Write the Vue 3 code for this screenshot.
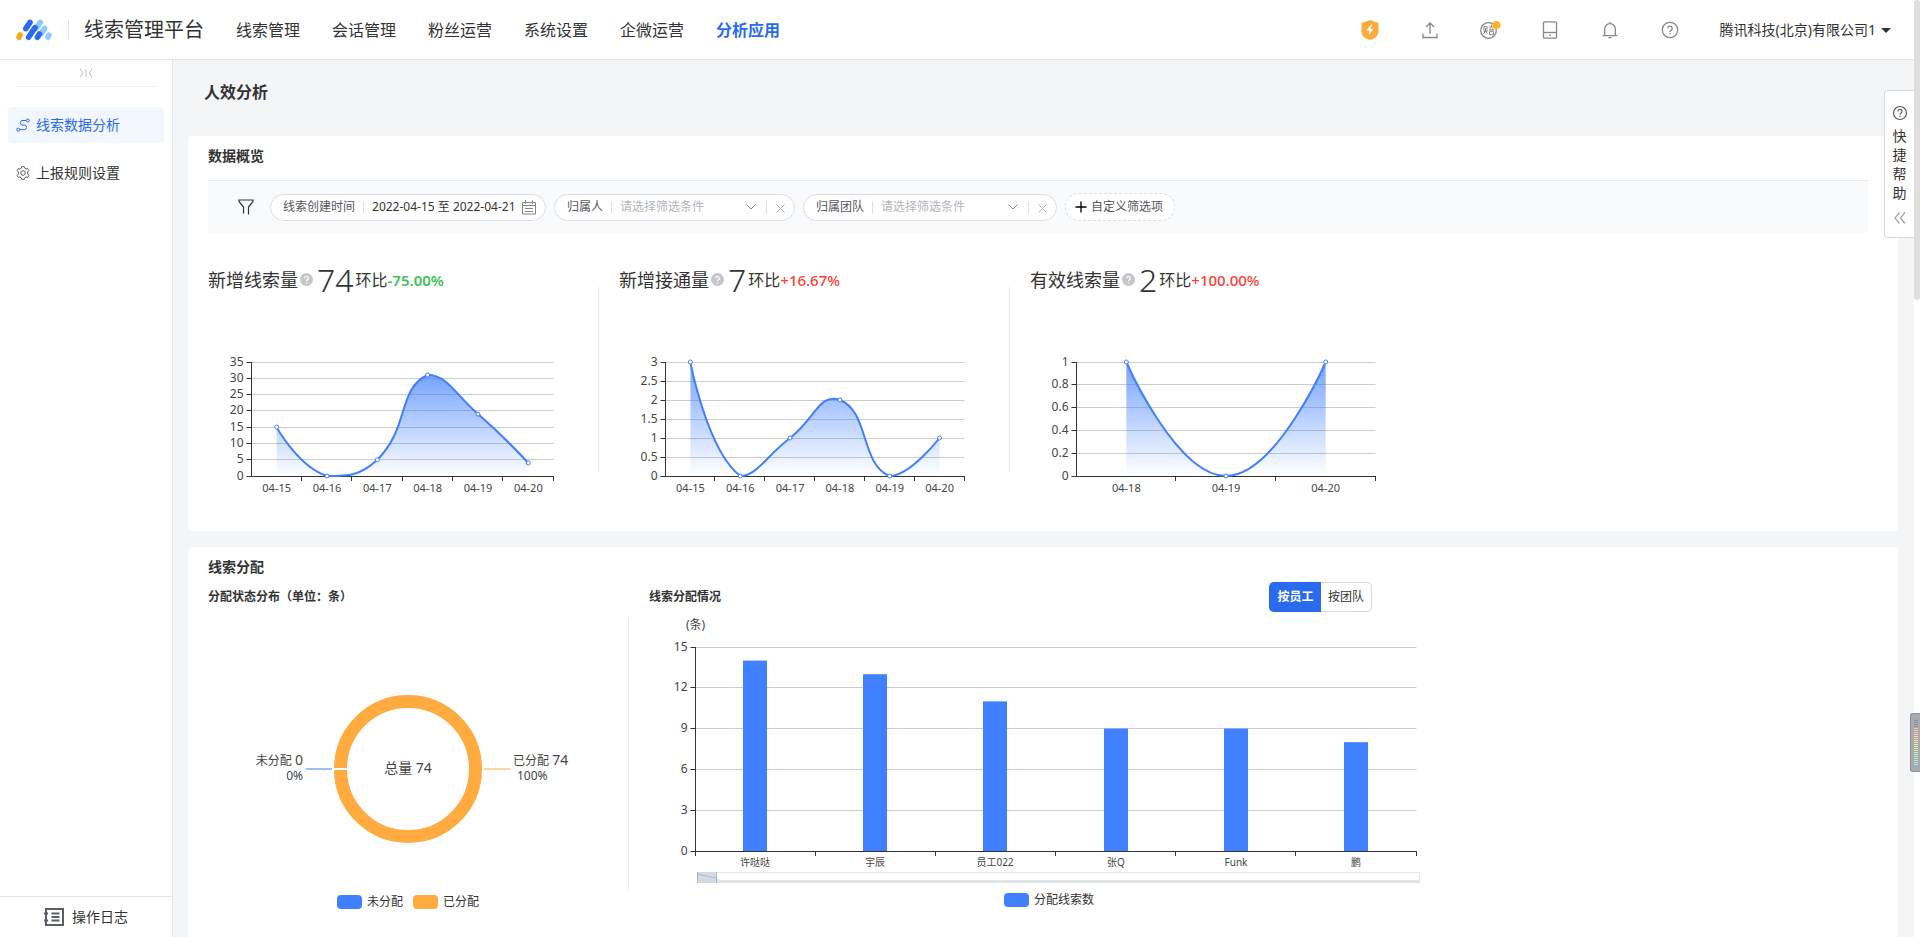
<script setup>
import { ref } from 'vue'

const navItems = ['线索管理', '会话管理', '粉丝运营', '系统设置', '企微运营', '分析应用']
const createdRange = ref('2022-04-15 至 2022-04-21')
const groupBy = ref('staff')

// Turns a series into plot coordinates, axis ticks and a smoothed path.
function buildTrend(cfg) {
  const top = 62
  const bottom = 176
  const { left, right, labels, values, ticks } = cfg
  const max = ticks[ticks.length - 1]
  const step = (right - left) / labels.length
  const toY = (v) => bottom - (v / max) * (bottom - top)
  const pts = values.map((v, i) => [left + step * (i + 0.5), toY(v)])
  const loX = pts[0][0]
  const hiX = pts[pts.length - 1][0]
  const ys = pts.map((p) => p[1])
  const loY = Math.min(...ys)
  const hiY = Math.max(...ys)
  const clamp = (p) => [Math.min(Math.max(p[0], loX), hiX), Math.min(Math.max(p[1], loY), hiY)]
  const smooth = 0.5
  let cp0 = pts[0]
  let line = `M${pts[0].join(' ')}`
  for (let i = 1; i < pts.length; i++) {
    const p = pts[i]
    const prev = pts[i - 1]
    const next = pts[i + 1]
    let cp1 = p
    let following = p
    if (next) {
      const v = [next[0] - prev[0], next[1] - prev[1]]
      const lenPrev = Math.hypot(p[0] - prev[0], p[1] - prev[1])
      const lenNext = Math.hypot(next[0] - p[0], next[1] - p[1])
      const ratio = lenNext / (lenNext + lenPrev)
      cp1 = [p[0] - v[0] * smooth * (1 - ratio), p[1] - v[1] * smooth * (1 - ratio)]
      following = [p[0] + v[0] * smooth * ratio, p[1] + v[1] * smooth * ratio]
    }
    line += `C${clamp(cp0).join(' ')} ${clamp(cp1).join(' ')} ${p.join(' ')}`
    cp0 = following
  }
  return {
    ...cfg,
    top,
    bottom,
    pts,
    line,
    area: `${line}L${hiX} ${bottom}L${loX} ${bottom}Z`,
    yTicks: ticks.map((t) => ({ label: t, y: Math.floor(toY(t)) + 0.5 })),
    xTicks: labels.map((_, i) => Math.round(left + step * (i + 1)) - 0.5),
  }
}

const trends = [
  buildTrend({
    name: '新增线索量', total: '74', change: '-75.00%', down: true, left: 43.5, right: 345.5,
    labels: ['04-15', '04-16', '04-17', '04-18', '04-19', '04-20'],
    values: [15, 0, 5, 31, 19, 4], ticks: [0, 5, 10, 15, 20, 25, 30, 35],
  }),
  buildTrend({
    name: '新增接通量', total: '7', change: '+16.67%', down: false, left: 46.5, right: 345.5,
    labels: ['04-15', '04-16', '04-17', '04-18', '04-19', '04-20'],
    values: [3, 0, 1, 2, 0, 1], ticks: [0, 0.5, 1, 1.5, 2, 2.5, 3],
  }),
  buildTrend({
    name: '有效线索量', total: '2', change: '+100.00%', down: false, left: 46.5, right: 345.5,
    labels: ['04-18', '04-19', '04-20'],
    values: [1, 0, 1], ticks: [0, 0.2, 0.4, 0.6, 0.8, 1],
  }),
]

const barLeft = 46.5
const barRight = 767.5
const barTop = 35
const barBottom = 239
const barStep = (barRight - barLeft) / 6
const bars = [
  ['许哒哒', 14], ['宇辰', 13], ['员工022', 11], ['张Q', 9], ['Funk', 9], ['鹏', 8],
].map(([name, value], i) => ({
  name,
  cx: Math.floor(barLeft + barStep * (i + 0.5)),
  tick: Math.round(barLeft + barStep * (i + 1)) - 0.5,
  height: (value / 15) * (barBottom - barTop),
}))
const barTicks = [0, 3, 6, 9, 12, 15].map((v) => ({
  v,
  y: Math.floor(barBottom - (v / 15) * (barBottom - barTop)) + 0.5,
}))

const meter = Array.from({ length: 23 }, (_, i) => {
  if (i < 4) return '#8e8f97'
  const stops = ['#ffc1a0', '#ffd79a', '#f6e99a', '#e3f2a0', '#c5f2ae', '#aeeec4', '#a4ecdc']
  return stops[Math.min(6, Math.floor(((i - 4) / 19) * 7))]
})
</script>

<template>
  <div class="app">
    <header class="topbar">
      <svg class="logo" width="36" height="22" viewBox="0 0 36 22" aria-hidden="true">
        <g fill="none" stroke-width="5.6" stroke-linecap="round">
          <path d="M3.1 18.2l.9-2.2" stroke="#ffa412" />
          <path d="M20.3 9.2l4-5.8M25.2 14.6l3.4-5.2M32 18l1-1.8" stroke="#8bcbff" />
          <path d="M9.8 9.6l4.2-6.2M12.6 18.2l6.4-9.6M21.4 18.2l2-3.2" stroke="#2b6af2" />
        </g>
      </svg>
      <span class="logo-divider"></span>
      <strong class="brand">线索管理平台</strong>
      <nav class="nav" aria-label="主导航">
        <a v-for="item in navItems" :key="item" href="#" :class="{ current: item === '分析应用' }">{{ item }}</a>
      </nav>
      <div class="tools">
        <button type="button" class="tool" aria-label="安全">
          <svg width="18" height="20" viewBox="0 0 18 20">
            <path d="M9 0l8.500 3v8c0 5-3.600 7.700-8.500 9C4.100 18.700.500 16 .500 11V3z" fill="#ffab40" />
            <path d="M9.800 4.800L5.600 10.600h2.700l-.800 4.600 4.700-6.300H9.500l1.700-4.100z" fill="#fff" />
          </svg>
        </button>
        <button type="button" class="tool" aria-label="上传">
          <svg width="16" height="18" viewBox="0 0 16 18">
            <path d="M8 13V2M4 6l4-4 4 4M1 12.500V16.500h14V12.500" />
          </svg>
        </button>
        <button type="button" class="tool" aria-label="赔付">
          <svg width="22" height="20" viewBox="0 0 22 20">
            <circle cx="9.500" cy="10.500" r="7.800" />
            <path d="M5 6.500h3v5H5zM6.500 8v3l-2 3M7 12l1.500 2M10 7h5M12.500 5v2M11 8.200l.500 1.600M14 8.200l-.500 1.600M9.800 10h5.400M10.500 11.700h4v3h-4z" stroke-width="1" />
            <circle cx="17.500" cy="5" r="4" fill="#ffb429" stroke="none" />
          </svg>
        </button>
        <button type="button" class="tool" aria-label="移动端">
          <svg width="16" height="20" viewBox="0 0 16 20">
            <rect x="1.500" y="1.800" width="13" height="16.400" rx="1" />
            <path d="M1.500 12.500h13" />
            <path d="M7.200 15.300h1.600" stroke-width="1.600" />
          </svg>
        </button>
        <button type="button" class="tool" aria-label="通知">
          <svg width="16" height="18" viewBox="0 0 16 18">
            <path d="M.500 14.700h15M2.700 14.500V8a5.300 5.300 0 0 1 10.600 0v6.500M8 1v1.500M6.500 16.700h3" />
          </svg>
        </button>
        <button type="button" class="tool" aria-label="帮助">
          <svg width="18" height="18" viewBox="0 0 18 18">
            <circle cx="9" cy="9" r="7.700" />
            <path d="M6.800 7.200a2.200 2.200 0 1 1 3.400 1.900c-.800.500-1.200.900-1.200 1.900" />
            <path d="M9 12.300v1.300" />
          </svg>
        </button>
      </div>
      <button type="button" class="account">腾讯科技(北京)有限公司1<i class="caret"></i></button>
    </header>

    <div class="body">
      <aside class="sidebar">
        <button type="button" class="collapse" aria-label="收起侧栏">
          <svg width="14" height="10" viewBox="0 0 14 10">
            <path d="M1 .500l2.500 4.500L1 9.500M7 1v8M13 .500l-2.500 4.500L13 9.500" />
          </svg>
        </button>
        <a href="#" class="side-link active">
          <svg width="14" height="14" viewBox="0 0 14 14">
            <path d="M10.300 2.500H6a2.300 2.300 0 0 0 0 4.500h2.200a2.300 2.300 0 0 1 0 4.600H3.700" />
            <circle cx="11.800" cy="2.500" r="1.500" />
            <circle cx="2.200" cy="11.600" r="1.500" />
          </svg>
          线索数据分析
        </a>
        <a href="#" class="side-link">
          <svg width="14" height="14" viewBox="0 0 14 14">
            <path d="M5.300 2.200L5.800.600h2.400l.500 1.600 1.300.800 1.700-.400 1.200 2-1.200 1.300v2.200l1.200 1.300-1.200 2-1.700-.400-1.300.800-.500 1.600H5.800l-.500-1.600-1.300-.800-1.700.400-1.200-2 1.200-1.300V5.900L1.100 4.600l1.200-2 1.700.400z" />
            <circle cx="7" cy="7" r="2.300" />
          </svg>
          上报规则设置
        </a>
        <a href="#" class="log-link">
          <svg width="20" height="18" viewBox="0 0 20 18">
            <rect x="2" y="1" width="17" height="16" />
            <path d="M7.500 5.500h8M7.500 9h8M7.500 12.500h8M0 5.500h4M0 12.500h4" />
          </svg>
          操作日志
        </a>
      </aside>

      <main class="content">
        <h1>人效分析</h1>

        <section class="card overview">
          <h2>数据概览</h2>
          <div class="filters">
            <svg class="funnel" width="16" height="16" viewBox="0 0 16 16" aria-hidden="true">
              <path d="M5.500 14.500V8L1 2.500V1h14v1.500L10.500 8v7.500" />
            </svg>
            <div class="pill date">
              <label for="created">线索创建时间</label>
              <input id="created" v-model="createdRange" type="text" />
              <svg width="14" height="15" viewBox="0 0 14 15" aria-hidden="true">
                <path d="M.500 2.500h13v11.500H.500zM.500 5.500h13M3.500 0v4M10.500 0v4M3 8.500h8M3 11.500h8" />
              </svg>
            </div>
            <div class="pill owner">
              <label for="owner">归属人</label>
              <select id="owner"><option>请选择筛选条件</option></select>
              <svg class="chev" width="10" height="6" viewBox="0 0 10 6" aria-hidden="true"><path d="M.500.500L5 5 9.500.500" /></svg>
              <button type="button" class="clear" aria-label="移除归属人">
                <svg width="9" height="9" viewBox="0 0 9 9"><path d="M.500.500l8 8M8.500.500l-8 8" /></svg>
              </button>
            </div>
            <div class="pill team">
              <label for="team">归属团队</label>
              <select id="team"><option>请选择筛选条件</option></select>
              <svg class="chev" width="10" height="6" viewBox="0 0 10 6" aria-hidden="true"><path d="M.500.500L5 5 9.500.500" /></svg>
              <button type="button" class="clear" aria-label="移除归属团队">
                <svg width="9" height="9" viewBox="0 0 9 9"><path d="M.500.500l8 8M8.500.500l-8 8" /></svg>
              </button>
            </div>
            <button type="button" class="custom">
              <svg width="12" height="12" viewBox="0 0 12 12"><path d="M6 .500v11M.500 6h11" /></svg>
              自定义筛选项
            </button>
          </div>

          <div class="trends">
            <article v-for="(t, n) in trends" :key="t.name" class="trend">
              <div class="stat">
                <span class="stat-name">{{ t.name }}</span>
                <svg class="hint" width="13" height="13" viewBox="0 0 13 13" aria-hidden="true">
                  <circle cx="6.500" cy="6.500" r="6.500" fill="#c4c6ca" stroke="none" />
                  <path d="M4.700 5.300a1.800 1.800 0 1 1 2.800 1.500c-.700.400-1 .700-1 1.300M6.500 9.200v1.300" />
                </svg>
                <span class="total">{{ t.total }}</span>
                <span class="ratio">环比<b :class="{ down: t.down }">{{ t.change }}</b></span>
              </div>
              <svg class="plot" width="380" height="200" viewBox="0 0 380 200" role="img" :aria-label="t.name">
                <defs>
                  <linearGradient :id="'fill' + n" x1="0" y1="0" x2="0" y2="1">
                    <stop offset="0" stop-color="#407fff" stop-opacity="0.72" />
                    <stop offset="1" stop-color="#407fff" stop-opacity="0" />
                  </linearGradient>
                </defs>
                <g v-for="tick in t.yTicks" :key="tick.label">
                  <line v-if="tick.label" class="grid-line" :x1="t.left" :x2="t.right" :y1="tick.y" :y2="tick.y" />
                  <line class="axis" :x1="t.left - 5" :x2="t.left" :y1="tick.y" :y2="tick.y" />
                  <text class="y-label" :x="t.left - 8" :y="tick.y + 3">{{ tick.label }}</text>
                </g>
                <path class="axis" :d="`M${t.left} ${t.top}V${t.bottom + 0.5}H${t.right}`" />
                <line v-for="x in t.xTicks" :key="x" class="axis" :x1="x" :x2="x" :y1="t.bottom" :y2="t.bottom + 5" />
                <text v-for="(l, i) in t.labels" :key="l" class="x-label" :x="t.pts[i][0]" :y="t.bottom + 16">{{ l }}</text>
                <path :d="t.area" :fill="`url(#fill${n})`" />
                <path :d="t.line" class="series" />
                <circle v-for="(p, i) in t.pts" :key="i" class="dot" :cx="p[0]" :cy="p[1]" r="2" />
              </svg>
            </article>
          </div>
        </section>

        <section class="card assign">
          <h2>线索分配</h2>
          <div class="assign-grid">
            <div class="status">
              <div class="sub-head"><h3>分配状态分布（单位：条）</h3></div>
              <svg width="400" height="277" viewBox="0 0 400 277" role="img" aria-label="分配状态分布">
                <circle cx="200" cy="157" r="67.500" fill="none" stroke="#ffab40" stroke-width="13" />
                <path d="M125 157h15" stroke="#fff" stroke-width="2" />
                <path d="M98 157h26" stroke="#9fbfff" stroke-width="2" />
                <path d="M276 157h26" stroke="#ffd59f" stroke-width="2" />
                <text x="200" y="161" class="sum">总量 74</text>
                <text x="95" y="153" class="pie end">未分配 <tspan class="num">0</tspan></text>
                <text x="95" y="168" class="pie end">0%</text>
                <text x="305" y="153" class="pie">已分配 <tspan class="num">74</tspan></text>
                <text x="309" y="168" class="pie">100%</text>
              </svg>
              <div class="legend">
                <span><i class="blue"></i>未分配</span>
                <span><i class="orange"></i>已分配</span>
              </div>
            </div>

            <div class="staff">
              <div class="sub-head">
                <h3>线索分配情况</h3>
                <div class="toggle">
                  <button type="button" :class="{ on: groupBy === 'staff' }" @click="groupBy = 'staff'">按员工</button>
                  <button type="button" :class="{ on: groupBy === 'team' }" @click="groupBy = 'team'">按团队</button>
                </div>
              </div>
              <svg width="800" height="276" viewBox="0 0 800 276" role="img" aria-label="线索分配情况">
                <text :x="barLeft" y="17" class="unit">(条)</text>
                <g v-for="tick in barTicks" :key="tick.v">
                  <line v-if="tick.v" class="grid-line" :x1="barLeft" :x2="barRight" :y1="tick.y" :y2="tick.y" />
                  <line class="axis" :x1="barLeft - 5" :x2="barLeft" :y1="tick.y" :y2="tick.y" />
                  <text class="y-label" :x="barLeft - 8" :y="tick.y + 3">{{ tick.v }}</text>
                </g>
                <rect v-for="b in bars" :key="b.name" :x="b.cx - 12" :y="barBottom - b.height" width="24" :height="b.height" fill="#407fff" />
                <path class="axis" :d="`M${barLeft} ${barTop}V${barBottom + 5}M${barLeft} ${barBottom + 0.5}H${barRight}`" />
                <g v-for="b in bars" :key="b.name">
                  <line class="axis" :x1="b.tick" :x2="b.tick" :y1="barBottom" :y2="barBottom + 5" />
                  <text class="bar-label" :x="b.cx" :y="barBottom + 15">{{ b.name }}</text>
                </g>
                <rect x="48.500" y="260.500" width="722" height="10" fill="#fff" stroke="#e4e6e9" />
                <path d="M68 266l3 2h700v3H48v-3z" fill="#dfe4e6" />
                <rect x="48" y="260" width="20" height="11" fill="#d3dae6" />
                <path d="M48 262l14 3 6 1" fill="none" stroke="#aebccf" />
                <path d="M48.500 260v11M67.500 260v11" stroke="#a7b7cc" />
              </svg>
              <div class="legend"><span><i class="blue"></i>分配线索数</span></div>
            </div>
          </div>
        </section>
      </main>
    </div>

    <button type="button" class="quick-help">
      <svg width="16" height="16" viewBox="0 0 16 16" aria-hidden="true">
        <circle cx="8" cy="8" r="6.500" />
        <path d="M6 6.500a2 2 0 1 1 3 1.700c-.700.400-1 .800-1 1.600M8 10.800v1.200" />
      </svg>
      <span>快捷帮助</span>
      <svg class="arrows" width="12" height="12" viewBox="0 0 12 12" aria-hidden="true"><path d="M5.500.500L1 6l4.500 5.500M11 .500L6.500 6l4.500 5.500" /></svg>
    </button>
    <div class="scroll-track"><div class="scroll-thumb"></div></div>
    <div class="meter"><i v-for="(c, i) in meter" :key="i" :style="{ background: c }"></i></div>
  </div>
</template>

<style>
html,
body {
  margin: 0;
  background: #f4f5f7;
}
</style>

<style scoped>
.app {
  position: relative;
  display: flex;
  flex-direction: column;
  height: 100vh;
  overflow: hidden;
  color: #333;
  font: 14px/20px "Noto Sans", "Noto Sans CJK SC", sans-serif;
  background: #f4f5f7;
}
* {
  box-sizing: border-box;
}
a {
  color: inherit;
  text-decoration: none;
}
button,
input,
select {
  margin: 0;
  padding: 0;
  border: 0;
  background: none;
  color: inherit;
  font: inherit;
}
svg {
  display: block;
  flex: none;
}
h1,
h2,
h3 {
  margin: 0;
}

.topbar {
  display: flex;
  flex: none;
  align-items: center;
  height: 60px;
  padding: 0 29px 0 16px;
  border-bottom: 1px solid #e3e4e8;
  background: #fff;
}
.logo-divider {
  width: 1px;
  height: 20px;
  margin: 0 15px 0 16px;
  background: #dfe1e6;
}
.brand {
  font-size: 20px;
  font-weight: 400;
  line-height: 28px;
}
.nav {
  display: flex;
  gap: 32px;
  margin-left: 32px;
  font-size: 16px;
}
.nav .current {
  color: #296bef;
  font-weight: 700;
}
.tools {
  display: flex;
  margin-left: auto;
  margin-right: 20px;
}
.tool {
  display: grid;
  place-items: center;
  width: 60px;
  height: 30px;
}
.tool svg {
  fill: none;
  stroke: #85878c;
  stroke-width: 1.3;
}
.tool:first-child svg {
  stroke: none;
}
.account {
  display: flex;
  align-items: center;
  gap: 5px;
}
.caret {
  margin-top: 2px;
  border: 5px solid transparent;
  border-top-color: #333;
  border-bottom: 0;
}

.body {
  display: flex;
  flex: 1;
  min-height: 0;
}
.sidebar {
  display: flex;
  flex: none;
  flex-direction: column;
  width: 173px;
  border-right: 1px solid #e3e4ea;
  background: #fff;
}
.collapse {
  display: grid;
  place-items: center;
  height: 27px;
  margin: 0 16px 20px;
  border-bottom: 1px solid #f0f1f3;
}
.collapse svg {
  fill: none;
  stroke: #bbbdc2;
}
.side-link {
  display: flex;
  align-items: center;
  gap: 6px;
  height: 36px;
  margin: 0 8px 12px;
  padding: 0 8px;
  border-radius: 4px;
}
.side-link svg {
  fill: none;
  stroke: #5d5f66;
}
.side-link.active {
  background: #f1f6ff;
  color: #296bef;
}
.side-link.active svg {
  stroke: #296bef;
}
.log-link {
  display: flex;
  align-items: center;
  gap: 8px;
  height: 41px;
  margin-top: auto;
  padding-left: 44px;
  border-top: 1px solid #e3e4ea;
}
.log-link svg {
  fill: none;
  stroke: #5d5f66;
  stroke-width: 2;
}

.content {
  flex: 1;
  min-width: 0;
  padding: 22px 22px 0 15px;
  overflow: hidden;
}
h1 {
  margin-left: 16px;
  padding-bottom: 34px;
  font-size: 16px;
  line-height: 20px;
}
.card {
  padding: 10px 30px 0 20px;
  border-radius: 4px;
  background: #fff;
}
h2 {
  font-size: 14px;
  line-height: 20px;
}
.overview {
  margin-bottom: 16px;
  padding-bottom: 31px;
}
.filters {
  display: flex;
  align-items: center;
  gap: 8px;
  height: 53px;
  margin-top: 14px;
  padding: 0 30px;
  border-top: 1px solid #e9eaee;
  background: #f9fafc;
  font-size: 12px;
}
.funnel {
  margin-right: 8px;
  fill: none;
  stroke: #333;
  stroke-width: 1.2;
}
.pill {
  display: flex;
  align-items: center;
  height: 27px;
  padding: 0 9px 0 12px;
  border: 1px solid #dcdee4;
  border-radius: 14px;
  background: #fff;
}
.pill label {
  padding-right: 8px;
  border-right: 1px solid #dcdee4;
  color: #55575c;
  line-height: 12px;
}
.pill svg {
  fill: none;
  stroke: #85878c;
}
.date {
  width: 276px;
}
.date input {
  flex: 1;
  min-width: 0;
  padding-left: 8px;
}
.owner {
  width: 241px;
}
.team {
  width: 254px;
}
.pill select {
  flex: 1;
  min-width: 0;
  padding-left: 8px;
  appearance: none;
  color: #b3b5ba;
}
.clear {
  margin-left: 10px;
  padding-left: 9px;
  border-left: 1px solid #dcdee4;
}
.pill .clear svg {
  stroke: #b3b5ba;
}
.clear svg {
  margin: 3px 0 1px;
}
.custom {
  display: flex;
  align-items: center;
  gap: 4px;
  height: 28px;
  padding: 0 11px 0 9px;
  border: 1px dashed #dcdee4;
  border-radius: 14px;
  background: #fff;
  color: #55575c;
}
.custom svg {
  stroke: #000;
  stroke-width: 1.3;
}

.trends {
  display: flex;
  margin-top: 27px;
}
.trend {
  width: 411px;
  flex: none;
  background: linear-gradient(#e9eaee, #e9eaee) 390px 27px / 1px 185px no-repeat;
}
.trend:last-child {
  background: none;
}
.stat {
  display: flex;
  align-items: center;
  height: 40px;
  white-space: nowrap;
}
.stat-name {
  font-size: 18px;
}
.hint {
  margin: 0 4px 2px 2px;
  fill: none;
  stroke: #fff;
  stroke-width: 1.2;
}
.total {
  margin-right: 2px;
  font-size: 32px;
  font-weight: 300;
  line-height: 40px;
}
.ratio {
  font-size: 16px;
}
.ratio b {
  color: #ff3e30;
  font-size: 15px;
  font-weight: 500;
}
.ratio .down {
  color: #3dc25b;
  font-weight: 600;
}

.grid-line {
  stroke: #ccc;
}
.axis {
  fill: none;
  stroke: #333;
}
.series {
  fill: none;
  stroke: #407fff;
  stroke-width: 2;
}
.dot {
  fill: #fff;
  stroke: #407fff;
  stroke-width: 1;
}
text {
  fill: #444;
  font-size: 12px;
}
.y-label {
  text-anchor: end;
}
.x-label {
  font-size: 11px;
  text-anchor: middle;
}
.bar-label {
  font-size: 10px;
  text-anchor: middle;
}
.unit {
  text-anchor: middle;
}
.sum {
  font-size: 14px;
  text-anchor: middle;
}
.end {
  text-anchor: end;
}
.num {
  font-size: 14px;
}

.assign {
  min-height: 420px;
}
.assign-grid {
  display: flex;
  margin-top: 5px;
}
.status {
  width: 441px;
  flex: none;
  background: linear-gradient(#e9eaee, #e9eaee) 420px 35px / 1px 272px no-repeat;
}
.status .legend {
  width: 400px;
  padding-top: 6px;
}
.staff {
  width: 800px;
}
.staff .legend {
  padding-top: 5px;
}
.sub-head {
  display: flex;
  align-items: center;
  justify-content: space-between;
  height: 30px;
}
.staff .sub-head {
  padding-right: 77px;
}
h3 {
  font-size: 12px;
  line-height: 20px;
}
.toggle {
  display: flex;
  font-size: 12px;
}
.toggle button {
  width: 52px;
  height: 30px;
  border: 1px solid #d5d7de;
}
.toggle button:first-child {
  border-right: 0;
  border-radius: 5px 0 0 5px;
}
.toggle button:last-child {
  width: 51px;
  border-left: 0;
  border-radius: 0 5px 5px 0;
}
.toggle .on {
  border-color: #296bef;
  background: #296bef;
  color: #fff;
  font-weight: 700;
}
.legend {
  display: flex;
  justify-content: center;
  gap: 10px;
  font-size: 12px;
  line-height: 14px;
}
.legend span {
  display: flex;
  gap: 5px;
}
.legend i {
  width: 25px;
  height: 14px;
  border-radius: 4px;
}
.blue {
  background: #407fff;
}
.orange {
  background: #ffab40;
}

.quick-help {
  position: absolute;
  top: 90px;
  right: 6px;
  display: flex;
  flex-direction: column;
  align-items: center;
  width: 30px;
  padding: 14px 0 13px;
  border: 1px solid #d8dae0;
  border-right: 0;
  border-radius: 4px 0 0 4px;
  background: #fff;
}
.quick-help span {
  width: 14px;
  margin: 5px 0 10px;
  line-height: 19px;
}
.quick-help svg {
  fill: none;
  stroke: #55575c;
  stroke-width: 1.2;
}
.quick-help .arrows {
  stroke: #a0a2a8;
}
.scroll-track {
  position: absolute;
  top: 0;
  right: 0;
  width: 6px;
  height: 100%;
  background: #fff;
}
.scroll-thumb {
  height: 32%;
  border-radius: 3px;
  background: #dfdfdf;
}
.meter {
  position: absolute;
  top: 713px;
  right: 0;
  display: flex;
  flex-direction: column;
  gap: 1px;
  width: 10px;
  padding: 6px 1px 6px 3px;
  border: 1px solid #8e8f97;
  border-right: 0;
  border-radius: 3px 0 0 3px;
  background: #a8a9b1;
}
.meter i {
  width: 4px;
  height: 1px;
}
</style>
